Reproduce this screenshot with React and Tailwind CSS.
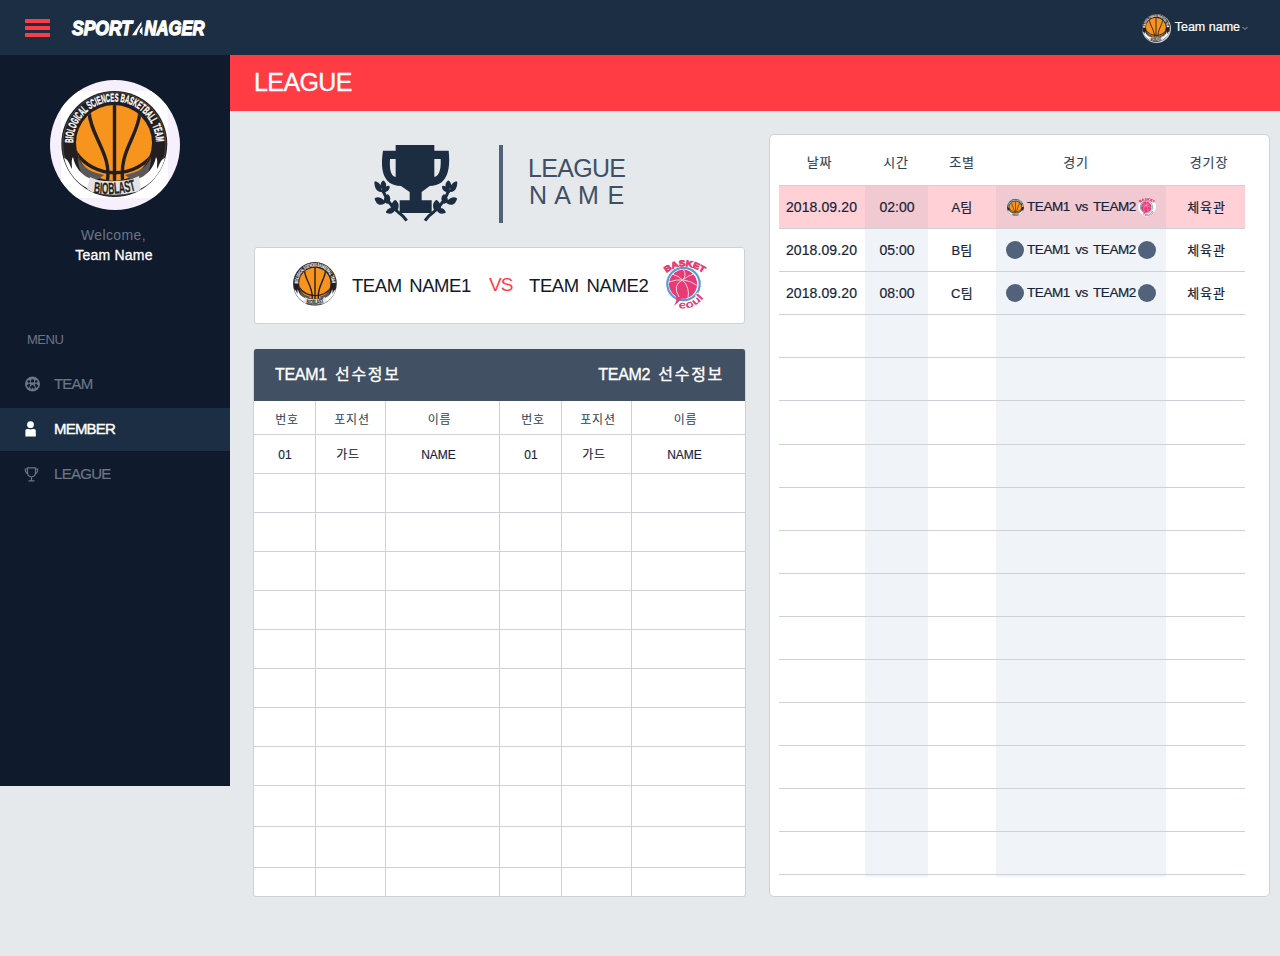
import React, { useId } from "react";

function BioblastLogo({ className }) {
  const id = useId();
  return (
    <svg viewBox="0 0 107 107" className={className}>
      <defs>
        <path id={id + "t"} d="M12 52 A41.200 41.200 0 0 1 95 52" />
        <path id={id + "b"} d="M32.500 102 Q54 105 76 99" />
        <clipPath id={id + "c"}>
          <circle cx="53" cy="52" r="38" />
        </clipPath>
      </defs>
      <circle cx="53.3" cy="53" r="53" fill="#231f20" />
      <circle cx="53.3" cy="53" r="51.600" fill="none" stroke="#55504f" strokeWidth="0.8" />
      <circle cx="53" cy="52" r="38" fill="#f7941e" />
      <g clipPath={`url(#${id}c)`} fill="none" stroke="#231f20" strokeWidth="3.4">
        <path d="M53.500 12 V92" />
        <path d="M28 20 C29 45 52 64 46 92" />
        <path d="M79 20 C78 45 57 60 62 92" />
        <path d="M14 60 C32 89 76 89 94 60" />
      </g>
      <path d="M17 66 C21 77 30 81 43 84 L32 92 C22 88 17 80 17 66Z M90 66 C86 77 77 81 64 84 L75 92 C85 88 90 80 90 66Z" fill="#5b5859" />
      <path d="M3 67 C8 69 8 73 11 78 C11 73 10 69 12 66 C14 76 20 85 33 89 L30 99 C18 94 7 83 3 67Z" fill="#fff" />
      <path d="M104 67 C99 69 99 73 96 78 C96 73 97 69 95 66 C93 76 87 85 74 89 L77 99 C89 94 100 83 104 67Z" fill="#fff" />
      <path d="M29 86 L36 89 Q54 92 71 88 L78 85 L80 98 L77 100.500 Q54 106.500 31 101 L26 98Z" fill="#e3e3e6" />
      <text fill="#fff" stroke="#fff" strokeWidth="0.35" fontFamily="Liberation Sans" fontWeight="bold" fontSize="11.500">
        <textPath href={`#${id}t`} textLength="129" lengthAdjust="spacingAndGlyphs">BIOLOGICAL SCIENCES BASKETBALL TEAM</textPath>
      </text>
      <text fill="#231f20" stroke="#231f20" strokeWidth="0.3" fontFamily="Liberation Sans" fontWeight="bold" fontSize="16">
        <textPath href={`#${id}b`} textLength="43" lengthAdjust="spacingAndGlyphs">BIOBLAST</textPath>
      </text>
    </svg>
  );
}

function SeoulLogo({ className }) {
  const id = useId();
  return (
    <svg viewBox="0 0 42 48" className={`overflow-visible ${className}`}>
      <defs>
        <path id={id + "t"} d="M2.500 13 Q19 -1 40 13.500" />
        <path id={id + "b"} d="M14.500 48 Q31 51 42 35" />
      </defs>
      <circle cx="19.500" cy="24" r="16.2" fill="#fff" stroke="#5b9bd5" strokeWidth="2.2" />
      <path d="M19.500 9.500 A14.600 14.600 0 1 1 17.500 38.700 C14.500 42 12 44.500 10 45.500 C12.500 42 13 38 11.500 36.300 A14.600 14.600 0 0 1 19.500 9.500Z" fill="#e63b74" />
      <g fill="none" stroke="#fbd3e0" strokeWidth="1">
        <path d="M5 22 Q20 16 34 26 M19.500 9.500 Q23 16 18.500 20 Q25 15 30 14 M18.500 20 Q8 25 15 37 M18.500 20 Q26 27 24 38 M8 14 Q15 16 18.500 20" />
      </g>
      <text fill="#e63b74" stroke="#e63b74" strokeWidth="0.8" fontFamily="Liberation Sans" fontWeight="bold" fontSize="8.500">
        <textPath href={`#${id}t`} textLength="40" lengthAdjust="spacingAndGlyphs">BASKET</textPath>
      </text>
      <text fill="#e63b74" stroke="#fff" strokeWidth="1.600" paintOrder="stroke" fontFamily="Liberation Sans" fontWeight="bold" fontSize="10.500">
        <textPath href={`#${id}b`} textLength="29" lengthAdjust="spacingAndGlyphs">eoul</textPath>
      </text>
    </svg>
  );
}

function Wordmark() {
  const t = { fill: "#fff", stroke: "#fff", strokeWidth: 1.3, fontFamily: "Liberation Sans", fontWeight: "bold", fontStyle: "italic", fontSize: 19.5 };
  return (
    <svg width="140" height="24" viewBox="0 -2 140 24" className="ml-[21px] overflow-visible">
      <text {...t} x="1" y="17" textLength="60" lengthAdjust="spacingAndGlyphs">SPORT</text>
      <path d="M61 17.300 L70.500 3.500 L70.500 7 L67 12.500 L65.500 17.300Z M71.500 8.500 L71.500 17.300 L68.500 14 L69 11.500Z" fill="#fff" />
      <text {...t} x="73.500" y="17" textLength="60" lengthAdjust="spacingAndGlyphs">NAGER</text>
    </svg>
  );
}

function LaurelTrophy() {
  const branch = (
    <g>
      <path d="M139 272 Q127 255 112 245 Q84 222 66 178" fill="none" stroke="#1c2d42" strokeWidth="9" />
      <path stroke="#1c2d42" strokeWidth="8" strokeLinejoin="round" d="M46 158 Q60 162 60 182 Q47 180 46 158Z M69 156 Q76 162 72 172 L65 172 Q63 162 69 156Z M84 171 Q84 182 67 184 Q70 173 84 171Z M47 207 Q58 203 71 217 Q54 227 47 207Z M82 197 Q90 206 81 217 L74 213 Q74 204 82 197Z M105 214 Q116 225 107 240 L95 234 Q96 221 105 214Z M81 246 Q86 234 100 240 Q95 250 81 246Z" fill="#1c2d42" />
    </g>
  );
  return (
    <svg width="84" height="77" viewBox="41 45 252 231">
      <path fillRule="evenodd" fill="#1c2d42" d="M106 45 H222 V62 H265 C270 112 266 166 208 168 L184 186 V211 H214 V249 H118 V211 H148 V186 L122 168 C64 166 60 112 68 62 H106Z M89 87 H106 V141 C88 137 88 110 89 87Z M241 87 H222 V141 C240 137 242 110 241 87Z" />
      {branch}
      <g transform="translate(333 0) scale(-1 1)">{branch}</g>
    </svg>
  );
}

function NavItem({ icon, label, active, top, textClass }) {
  return (
    <div className={`flex h-[43px] items-center pb-px pl-6 ${active ? "bg-[#1c2e43] text-white [-webkit-text-stroke:0.4px]" : "text-[#6b7585] [-webkit-text-stroke:0.2px]"} ${top}`}>
      <div className="flex w-[30px] items-center">{icon}</div>
      <span className={`text-[15px] leading-5 ${textClass}`}>{label}</span>
    </div>
  );
}

const teamIcon = (
  <svg width="17" height="16" viewBox="0 0 17 16">
    <circle cx="8.500" cy="8" r="7.500" fill="#6b7585" />
    <g fill="#0f1a2d">
      <circle cx="8.500" cy="5" r="1.700" />
      <circle cx="4.800" cy="5.500" r="1.300" />
      <circle cx="12.200" cy="5.500" r="1.300" />
      <path d="M2.500 10 L5 7.500 L6.200 8.500 L5 12Z M14.500 10 L12 7.500 L10.800 8.500 L12 12Z M6 11 L8.500 7.500 L11 11 L10 13.500 L8.500 11.500 L7 13.500Z" />
    </g>
    <path d="M8.500 6.500 V9 M6 10 L8.500 8.500 L11 10" stroke="#6b7585" strokeWidth="0.800" fill="none" />
  </svg>
);
const memberIcon = (
  <svg width="14" height="16" viewBox="0 0 14 16" fill="#fff">
    <circle cx="6.500" cy="3.700" r="3.400" />
    <path d="M3 8 H4.500 L6.500 8.600 L8.500 8 H10 Q11.800 8 11.800 9.500 V15.500 H1.400 V9.500 Q1.400 8 3 8Z" />
  </svg>
);
const leagueIcon = (
  <svg width="15" height="15" viewBox="0 0 15 15" fill="none" stroke="#6b7585" strokeWidth="1.200">
    <path d="M3.500 0.800 H11.500 V5.500 Q11.500 9.500 7.500 10 Q3.500 9.500 3.500 5.500Z M3.500 2 H1.300 Q1.300 6 4 7 M11.500 2 H13.700 Q13.700 6 11 7 M7.500 10 V13.500 M4.500 13.800 H10.500" />
  </svg>
);

const cols = "grid grid-cols-[62px_70px_114px_62px_70px_113px]";
const rosterRows = [
  ["h-[39px]", ["01", "가드", "NAME", "01", "가드", "NAME"]],
  ...Array(8).fill(["h-[39px]", null]),
  ["h-[41px]", null],
  ["h-[41px]", null],
  ["h-[28px]", null],
];

function RosterRow({ cells, height, head, last }) {
  const pads = ["pl-px tracking-[0.2px]", "pr-[5px] tracking-[0.8px]", "pr-[8px]", "pl-px tracking-[0.2px]", "pr-[5px] tracking-[0.8px]", "pr-[8px]"];
  const headPads = ["pl-[5px]", "pl-[3px]", "pr-[6px]", "pl-[5px]", "pl-[3px]", "pr-[6px]"];
  return (
    <div className={`${cols} ${height}`}>
      {(cells || Array(6).fill("")).map((c, i) => (
        <div
          key={i}
          className={`flex items-center justify-center border-[#ced2d8] text-[12px] ${last ? "" : "border-b"} ${i < 5 ? "border-r" : ""} ${head ? headPads[i] + " pt-[4px] tracking-[0.8px] text-[#2d3e54]" : pads[i] + " pt-px text-[#16233a] [-webkit-text-stroke:0.15px]"}`}
        >
          {c}
        </div>
      ))}
    </div>
  );
}

const gameGrid = "grid grid-cols-[86px_63px_68px_170px_79px]";
const games = [
  ["2018.09.20", "02:00", "A팀"],
  ["2018.09.20", "05:00", "B팀"],
  ["2018.09.20", "08:00", "C팀"],
];

function Matchup({ first }) {
  return (
    <div className="flex items-center justify-center">
      {first ? (
        <span className="mr-[3px] flex size-[18px] items-center justify-center rounded-full bg-[#dcd3d8]"><BioblastLogo className="size-[17px]" /></span>
      ) : (
        <span className="mr-[3px] size-[18px] rounded-full bg-[#51627a]" />
      )}
      <span className="w-[110px] whitespace-nowrap pt-px text-[13.5px] tracking-[-0.42px] [word-spacing:2px]">TEAM1 vs TEAM2</span>
      {first ? (
        <span className="ml-px flex size-[18px] items-center justify-center rounded-full bg-white"><SeoulLogo className="h-[18px] w-[16px]" /></span>
      ) : (
        <span className="ml-px size-[18px] rounded-full bg-[#51627a]" />
      )}
    </div>
  );
}

function GameRow({ i }) {
  const g = games[i];
  const hot = i === 0;
  const band = hot ? "bg-[#f0c9d1]" : "bg-[#f0f3f8]";
  return (
    <div className={`${gameGrid} border-b border-[#ced2d8] text-[14px] text-[#16233a] [-webkit-text-stroke:0.2px] ${hot ? "bg-[#ffd0d5]" : ""} ${i === 5 ? "h-[44px]" : "h-[43px]"}`}>
      <div className="flex items-center justify-center pr-px tracking-[0.1px]">{g?.[0]}</div>
      <div className={`flex items-center justify-center pl-px ${band}`}>{g?.[1]}</div>
      <div className="flex items-center justify-center pt-px text-[13px] tracking-[0.3px]">{g?.[2]}</div>
      <div className={`flex items-center justify-center ${band}`}>{g && <Matchup first={hot} />}</div>
      <div className="flex items-center justify-center pl-[2px] pt-px text-[13px] tracking-[0.9px]">{g && "체육관"}</div>
    </div>
  );
}

export default function App() {
  return (
    <div className="flex h-[956px] w-[1280px] flex-col bg-[#e5e9ec] font-['Liberation_Sans','Noto_Sans_CJK_KR',sans-serif]">
      <header className="flex h-[55px] shrink-0 items-center bg-[#1c2e43] pl-[25px]">
        <div className="flex flex-col gap-[3px]">
          <div className="h-1 w-[25px] bg-[#ff3c44]" />
          <div className="h-1 w-[25px] bg-[#ff3c44]" />
          <div className="h-1 w-[25px] bg-[#ff3c44]" />
        </div>
        <Wordmark />
        <div className="ml-auto flex items-center pr-[32px]">
          <span className="mr-1 mt-px flex size-[29px] items-center justify-center rounded-full bg-[#cfccd4]"><BioblastLogo className="size-[28px]" /></span>
          <span className="text-[12.5px] text-white [-webkit-text-stroke:0.2px]">Team name</span>
          <svg width="6" height="5" viewBox="0 0 6 5" fill="none" stroke="#a9b2bf" strokeWidth="0.900" className="ml-0.5 mt-0.5"><path d="M0.500 1 L3 3.500 L5.500 1" /></svg>
        </div>
      </header>
      <div className="flex flex-1 items-start">
        <aside className="h-[731px] w-[230px] shrink-0 bg-[#0f1a2d] pt-[25px]">
          <div className="mx-auto flex size-[130px] items-start overflow-hidden rounded-full bg-[#f6effc] pl-[11px] pt-[11px]">
            <div className="size-[107px] bg-white"><BioblastLogo className="size-[107px]" /></div>
          </div>
          <div className="mt-[15px] pr-[3px] text-center text-[14px] leading-5 tracking-[0.4px] text-[#6b7585]">Welcome,</div>
          <div className="pr-0.5 text-center text-[14px] leading-5 tracking-[0.2px] text-white [-webkit-text-stroke:0.3px]">Team Name</div>
          <div className="mt-[65px] pl-[27px] text-[13px] leading-5 tracking-[-0.5px] text-[#6b7585]">MENU</div>
          <NavItem icon={teamIcon} label="TEAM" top="mt-[13px]" textClass="tracking-[-0.8px]" />
          <NavItem icon={memberIcon} label="MEMBER" active top="mt-[2px]" textClass="tracking-[-0.8px]" />
          <NavItem icon={leagueIcon} label="LEAGUE" top="mt-[2px]" textClass="tracking-[-0.7px]" />
        </aside>
        <main className="flex-1">
          <div className="flex h-[56px] items-center bg-[#ff3c44] pl-6 text-[25px] tracking-[-0.6px] text-white [-webkit-text-stroke:0.3px]">LEAGUE</div>
          <div className="flex items-start">
            <div className="ml-[23px] w-[493px]">
              <div className="mt-[34px] flex items-start pl-[121px]">
                <LaurelTrophy />
                <div className="ml-[41px] h-[78px] w-1 bg-[#51627a]" />
                <div className="ml-[25px] mt-[10px] text-[25px] leading-[27px] text-[#415063]">
                  <div className="tracking-[-0.7px]">LEAGUE</div>
                  <div className="pl-px tracking-[0.8px]">N A M E</div>
                </div>
              </div>
              <div className="ml-px mt-[24px] flex h-[77px] w-[491px] items-center rounded-[3px] border border-[#ced2d8] bg-white pl-[37px] text-[19px] text-[#10192c]">
                <BioblastLogo className="mb-[3px] ml-px size-[44px]" />
                <span className="ml-[15px] w-[137px] whitespace-nowrap text-[18.5px] tracking-[-0.45px] [word-spacing:3px]">TEAM NAME1</span>
                <span className="w-[40px] tracking-[-1px] text-[#ff3c44]">VS</span>
                <span className="w-[135px] whitespace-nowrap text-[18.5px] tracking-[-0.4px] [word-spacing:3px]">TEAM NAME2</span>
                <SeoulLogo className="mb-[4px] h-[48px] w-[42px]" />
              </div>
              <div className="mt-[25px] h-[548px] overflow-hidden rounded-[3px] border border-t-0 border-[#ced2d8] bg-white">
                <div className="flex h-[52px] items-center justify-between bg-[#415063] pl-[21px] pr-[21px] text-[16px] text-white [-webkit-text-stroke:0.35px]">
                  <span><span className="tracking-[-0.3px] [word-spacing:4px]">TEAM1 </span><span className="tracking-[1.7px]">선수정보</span></span>
                  <span><span className="tracking-[-0.3px] [word-spacing:4px]">TEAM2 </span><span className="tracking-[1.7px]">선수정보</span></span>
                </div>
                <RosterRow head height="h-[34px]" cells={["번호", "포지션", "이름", "번호", "포지션", "이름"]} />
                {rosterRows.map(([h, cells], i) => (
                  <RosterRow key={i} height={h} cells={cells} last={i === rosterRows.length - 1} />
                ))}
              </div>
            </div>
            <section className="ml-[23px] mt-[23px] h-[763px] w-[501px] rounded-[5px] border border-[#ced2d8] bg-white pl-[9px]">
              <div className="w-[466px]">
                <div className={`${gameGrid} h-[51px] items-center border-b border-[#ced2d8] text-center text-[13px] tracking-[0.8px] text-[#2d3e54] [-webkit-text-stroke:0.1px]`}>
                  <div className="pr-[5px] pt-[6px]">날짜</div>
                  <div className="pr-px pt-[6px]">시간</div>
                  <div className="pt-[6px]">조별</div>
                  <div className="pr-[10px] pt-[6px]">경기</div>
                  <div className="pl-[7px] pt-[6px]">경기장</div>
                </div>
                {Array.from({ length: 16 }, (_, i) => <GameRow key={i} i={i} />)}
                <div className={`${gameGrid} h-[2px]`}>
                  <div /><div className="bg-[#f0f3f8]" /><div /><div className="bg-[#f0f3f8]" /><div />
                </div>
              </div>
            </section>
          </div>
        </main>
      </div>
    </div>
  );
}
